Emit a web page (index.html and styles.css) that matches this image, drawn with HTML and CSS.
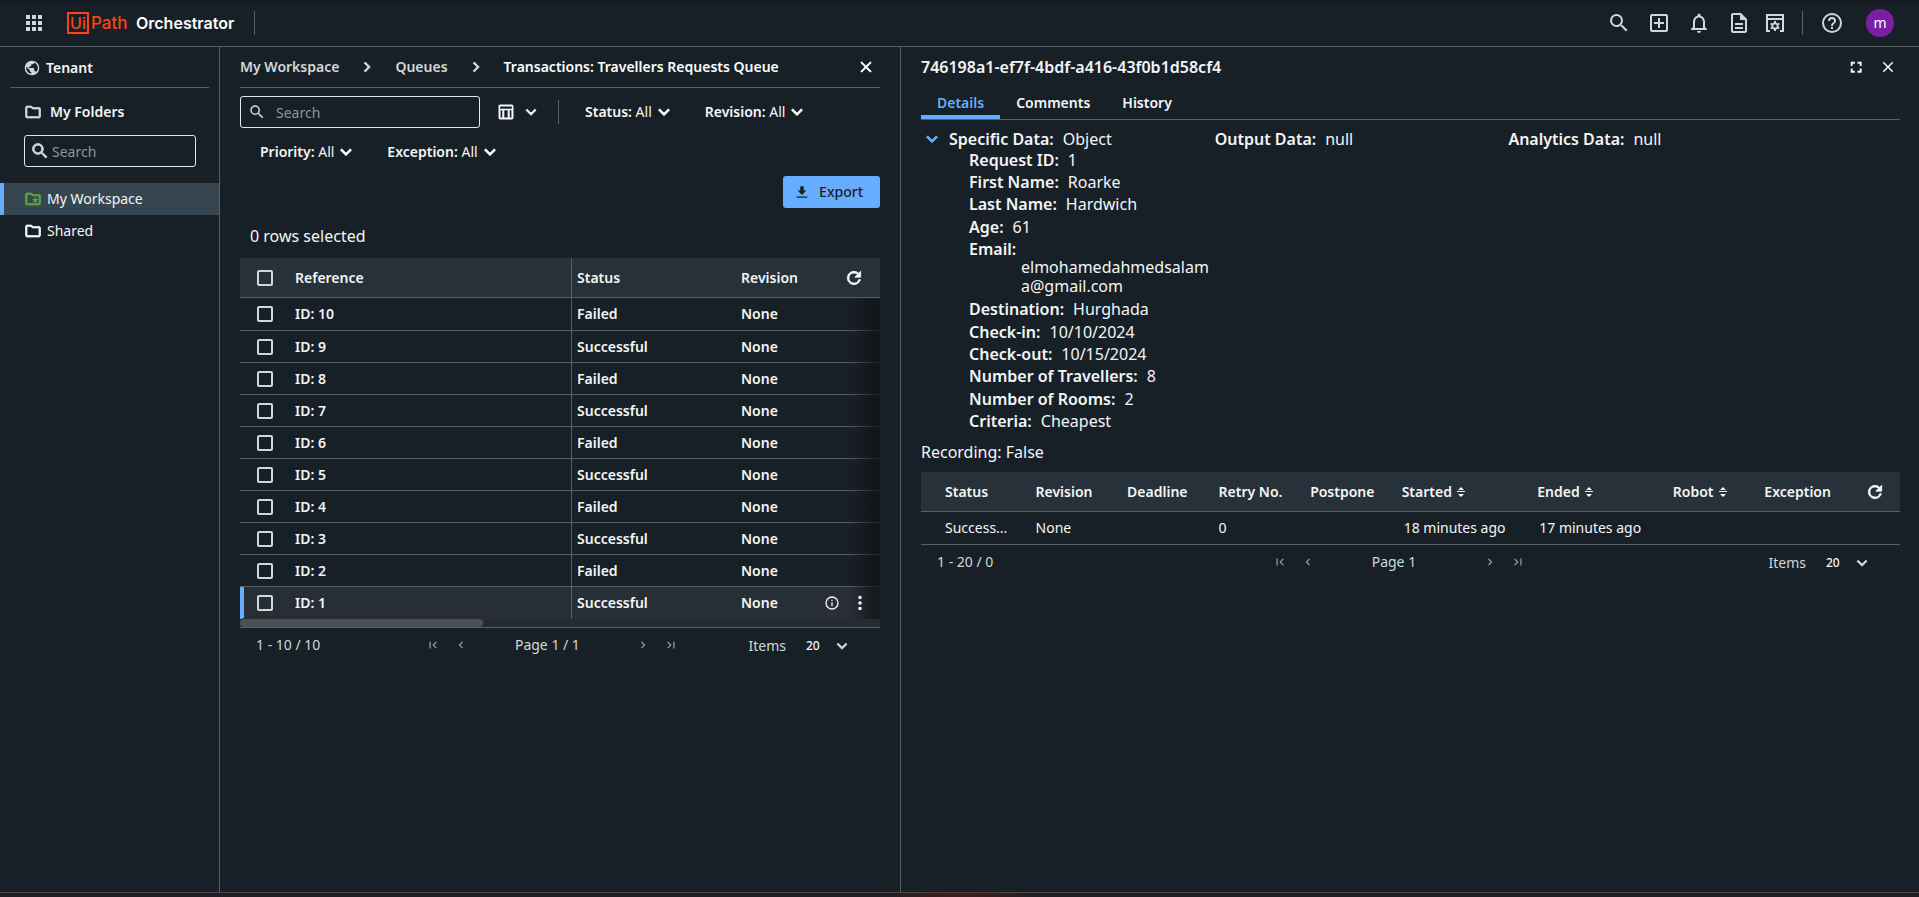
FILE: index.html
```html
<!DOCTYPE html>
<html lang="en">
<head>
<meta charset="utf-8">
<title>UiPath Orchestrator</title>
<link rel="stylesheet" href="styles.css">
</head>
<body>
<svg class="sprite" aria-hidden="true">
  <symbol id="search" viewBox="0 0 24 24"><path d="M15.5 14h-.79l-.28-.27A6.47 6.47 0 0 0 16 9.5 6.5 6.5 0 1 0 9.5 16c1.61 0 3.09-.59 4.23-1.57l.27.28v.79l5 4.99L20.49 19l-4.99-5zm-6 0C7.01 14 5 11.99 5 9.5S7.01 5 9.5 5 14 7.01 14 9.5 11.99 14 9.5 14z"/></symbol>
  <symbol id="down" viewBox="0 0 24 24"><path d="M7.41 8.59 12 13.17l4.59-4.58L18 10l-6 6-6-6z"/></symbol>
  <symbol id="right" viewBox="0 0 24 24"><path d="M10 6 8.59 7.41 13.17 12l-4.58 4.59L10 18l6-6z"/></symbol>
  <symbol id="left" viewBox="0 0 24 24"><path d="M15.41 7.41 14 6l-6 6 6 6 1.41-1.41L10.83 12z"/></symbol>
  <symbol id="first" viewBox="0 0 24 24"><path d="M18.41 16.59 13.82 12l4.59-4.59L17 6l-6 6 6 6zM6 6h2v12H6z"/></symbol>
  <symbol id="last" viewBox="0 0 24 24"><path d="M5.59 7.41 10.18 12l-4.59 4.59L7 18l6-6-6-6zM16 6h2v12h-2z"/></symbol>
  <symbol id="close" viewBox="0 0 24 24"><path d="M19 6.41 17.59 5 12 10.59 6.41 5 5 6.41 10.59 12 5 17.59 6.41 19 12 13.41 17.59 19 19 17.59 13.41 12z"/></symbol>
  <symbol id="refresh" viewBox="0 0 24 24"><path d="M17.65 6.35A7.96 7.96 0 0 0 12 4a8 8 0 1 0 7.73 10h-2.08A6 6 0 1 1 12 6c1.66 0 3.14.69 4.22 1.78L13 11h7V4z"/></symbol>
  <symbol id="folder" viewBox="0 0 24 24"><path d="m9.17 6 2 2H20v10H4V6h5.17M10 4H4c-1.1 0-2 .9-2 2v12c0 1.1.9 2 2 2h16c1.1 0 2-.9 2-2V8c0-1.1-.9-2-2-2h-8z"/></symbol>
  <symbol id="sort" viewBox="0 0 12 16"><path d="M6 3l3 3H3zM6 13l-3-3h6zM2 7h8v1H2z"/></symbol>
</svg>

<header class="topbar">
  <button class="icon-btn apps" aria-label="Apps"><svg class="i24" viewBox="0 0 24 24"><path d="M4 4h4v4H4zm6 0h4v4h-4zm6 0h4v4h-4zM4 10h4v4H4zm6 0h4v4h-4zm6 0h4v4h-4zM4 16h4v4H4zm6 0h4v4h-4zm6 0h4v4h-4z"/></svg></button>
  <a class="brand" href="#"><span class="logo-box">Ui</span><span class="logo-path">Path</span><span class="product">Orchestrator</span></a>
  <span class="vline"></span>
  <nav class="tools" aria-label="Tools">
    <button class="icon-btn" aria-label="Search"><svg class="i24"><use href="#search"/></svg></button>
    <button class="icon-btn" aria-label="Add"><svg class="i24" viewBox="0 0 24 24"><path d="M19 3H5a2 2 0 0 0-2 2v14c0 1.1.9 2 2 2h14a2 2 0 0 0 2-2V5a2 2 0 0 0-2-2zm0 16H5V5h14v14zm-8-2h2v-4h4v-2h-4V7h-2v4H7v2h4z"/></svg></button>
    <button class="icon-btn" aria-label="Notifications"><svg class="i24" viewBox="0 0 24 24"><path d="M12 22c1.1 0 2-.9 2-2h-4c0 1.1.9 2 2 2zm6-6v-5c0-3.07-1.63-5.64-4.5-6.32V4a1.5 1.5 0 0 0-3 0v.68C7.64 5.36 6 7.92 6 11v5l-2 2v1h16v-1zm-2 1H8v-6c0-2.48 1.51-4.5 4-4.5s4 2.02 4 4.5z"/></svg></button>
    <button class="icon-btn" aria-label="Documentation"><svg class="i24" viewBox="0 0 24 24"><path d="M8 16h8v2H8zm0-4h8v2H8zm6-10H6c-1.100 0-2 .9-2 2v16c0 1.100.89 2 1.990 2H18c1.100 0 2-.9 2-2V8zm4 18H6V4h7v5h5z"/></svg></button>
    <button class="icon-btn settings" aria-label="Settings"><svg class="i24" viewBox="0 0 24 24"><path fill-rule="evenodd" d="M3 3h18v18h-4v-2h2V9H5v10h2v2H3zm2 2v2h14V5z"/><circle cx="12" cy="15" r="2.700" fill="none" stroke="currentColor" stroke-width="1.800"/><path fill="none" stroke="currentColor" stroke-width="2" d="M12 10v2m0 6v2m-4.300-7.500 1.700 1m5.200 3 1.700 1m-8.600 0 1.700-1m5.200-3 1.700-1"/></svg></button>
    <span class="vline"></span>
    <button class="icon-btn help" aria-label="Help"><svg class="i24" viewBox="0 0 24 24"><path d="M11 18h2v-2h-2zm1-16a10 10 0 1 0 0 20 10 10 0 0 0 0-20zm0 18a8 8 0 1 1 0-16 8 8 0 0 1 0 16zm0-14a4 4 0 0 0-4 4h2c0-1.100.9-2 2-2s2 .9 2 2c0 2-3 1.750-3 5h2c0-2.250 3-2.500 3-5a4 4 0 0 0-4-4z"/></svg></button>
    <button class="avatar" aria-label="Account">m</button>
  </nav>
</header>

<div class="shell">
  <aside class="sidebar">
    <a class="tenant" href="#"><svg class="i16" viewBox="0 0 24 24"><path d="M12 1a11 11 0 1 0 0 22 11 11 0 0 0 0-22zm-1.100 19.700A8.800 8.800 0 0 1 3.500 10l5.200 5.300v1c0 1.200 1 2.200 2.200 2.200zm7.600-2.800a2.200 2.200 0 0 0-2.100-1.500h-1.100v-3.300c0-.6-.5-1.100-1.100-1.100H7.600V9.800h2.200c.6 0 1.100-.5 1.100-1.100V6.500h2.200c1.200 0 2.200-1 2.200-2.200v-.5a8.800 8.800 0 0 1 3.200 14.100z"/></svg>Tenant</a>
    <h2 class="folders"><svg class="i18 heavy"><use href="#folder"/></svg>My Folders</h2>
    <label class="search side-search"><svg class="i20 heavy"><use href="#search"/></svg><input type="text" placeholder="Search" aria-label="Search folders"></label>
    <nav class="tree" aria-label="Folders">
      <a class="node active" href="#"><svg class="i18 heavy green" viewBox="0 0 24 24"><path d="m9.170 6 2 2H20v10H4V6h5.170M10 4H4c-1.100 0-2 .9-2 2v12c0 1.100.9 2 2 2h16c1.100 0 2-.9 2-2V8c0-1.100-.9-2-2-2h-8z"/><path stroke="none" d="m15 9 1.200 2.900 3.100.2-2.400 2 .8 3L15 15.500l-2.700 1.600.8-3-2.400-2 3.100-.2z"/></svg>My Workspace</a>
      <a class="node" href="#"><svg class="i18 heavy"><use href="#folder"/></svg>Shared</a>
    </nav>
  </aside>

  <main class="list">
    <div class="crumbs">
      <a href="#">My Workspace</a><svg class="i20 heavy"><use href="#right"/></svg><a href="#">Queues</a><svg class="i20 heavy"><use href="#right"/></svg><span class="current">Transactions: Travellers Requests Queue</span>
      <button class="icon-btn close" aria-label="Close"><svg class="i18 heavy"><use href="#close"/></svg></button>
    </div>
    <div class="filters">
      <label class="search main-search"><svg class="i18"><use href="#search"/></svg><input type="text" placeholder="Search" aria-label="Search transactions"></label>
      <button class="columns" aria-label="Columns"><svg class="i20" viewBox="0 0 24 24"><path fill-rule="evenodd" d="M5 3h14a2 2 0 0 1 2 2v14a2 2 0 0 1-2 2H5a2 2 0 0 1-2-2V5c0-1.100.9-2 2-2zm0 2.500V8h14V5.500zM5.500 10v8.500h2V10zm4.500 0v8.500h4V10zm6.500 0v8.500h2V10z"/></svg><svg class="i20 heavy"><use href="#down"/></svg></button>
      <span class="vline"></span>
      <button class="filter"><b>Status:</b> All<svg class="i22 heavy"><use href="#down"/></svg></button>
      <button class="filter"><b>Revision:</b> All<svg class="i22 heavy"><use href="#down"/></svg></button>
      <button class="filter"><b>Priority:</b> All<svg class="i22 heavy"><use href="#down"/></svg></button>
      <button class="filter"><b>Exception:</b> All<svg class="i22 heavy"><use href="#down"/></svg></button>
    </div>
    <button class="export"><svg class="i14" viewBox="0 0 24 24"><path d="M19.500 9.500h-4.500V2H9v7.500H4.500L12 17zM3 19.500h18V22H3z"/></svg>Export</button>
    <p class="selected-count">0 rows selected</p>
    <div class="grid-wrap">
      <table class="grid">
        <colgroup><col class="c-check"><col class="c-ref"><col class="c-status"><col class="c-rev"><col class="c-act"></colgroup>
        <thead><tr><th><input type="checkbox" aria-label="Select all"></th><th class="ref">Reference</th><th>Status</th><th>Revision</th><th class="act"><button class="icon-btn" aria-label="Refresh"><svg class="i20 heavy"><use href="#refresh"/></svg></button></th></tr></thead>
        <tbody>
          <tr><td><input type="checkbox" aria-label="ID: 10"></td><td class="ref">ID: 10</td><td>Failed</td><td>None</td><td></td></tr>
          <tr><td><input type="checkbox" aria-label="ID: 9"></td><td class="ref">ID: 9</td><td>Successful</td><td>None</td><td></td></tr>
          <tr><td><input type="checkbox" aria-label="ID: 8"></td><td class="ref">ID: 8</td><td>Failed</td><td>None</td><td></td></tr>
          <tr><td><input type="checkbox" aria-label="ID: 7"></td><td class="ref">ID: 7</td><td>Successful</td><td>None</td><td></td></tr>
          <tr><td><input type="checkbox" aria-label="ID: 6"></td><td class="ref">ID: 6</td><td>Failed</td><td>None</td><td></td></tr>
          <tr><td><input type="checkbox" aria-label="ID: 5"></td><td class="ref">ID: 5</td><td>Successful</td><td>None</td><td></td></tr>
          <tr><td><input type="checkbox" aria-label="ID: 4"></td><td class="ref">ID: 4</td><td>Failed</td><td>None</td><td></td></tr>
          <tr><td><input type="checkbox" aria-label="ID: 3"></td><td class="ref">ID: 3</td><td>Successful</td><td>None</td><td></td></tr>
          <tr><td><input type="checkbox" aria-label="ID: 2"></td><td class="ref">ID: 2</td><td>Failed</td><td>None</td><td></td></tr>
          <tr class="open"><td><input type="checkbox" aria-label="ID: 1"></td><td class="ref">ID: 1</td><td>Successful</td><td>None</td><td class="act"><div class="actions"><button class="icon-btn" aria-label="Details"><svg class="i16" viewBox="0 0 24 24"><path d="M11 7h2v2h-2zm0 4h2v6h-2zm1-9a10 10 0 1 0 0 20 10 10 0 0 0 0-20zm0 18a8 8 0 1 1 0-16 8 8 0 0 1 0 16z"/></svg></button><button class="icon-btn" aria-label="More actions"><svg class="i22" viewBox="0 0 24 24"><path d="M12 8a2 2 0 1 0 0-4 2 2 0 0 0 0 4zm0 2a2 2 0 1 0 0 4 2 2 0 0 0 0-4zm0 6a2 2 0 1 0 0 4 2 2 0 0 0 0-4z"/></svg></button></div></td></tr>
        </tbody>
      </table>
      <div class="edge-shade"></div>
    </div>
    <div class="hscroll"><span></span></div>
    <div class="pager">
      <span>1 - 10 / 10</span>
      <div class="pages"><button aria-label="First page"><svg class="i14"><use href="#first"/></svg></button><button aria-label="Previous page"><svg class="i14"><use href="#left"/></svg></button><span>Page 1 / 1</span><button aria-label="Next page"><svg class="i14"><use href="#right"/></svg></button><button aria-label="Last page"><svg class="i14"><use href="#last"/></svg></button></div>
      <label class="items">Items<select><option>20</option></select><svg class="i20 heavy"><use href="#down"/></svg></label>
    </div>
  </main>

  <section class="detail">
    <div class="detail-head"><h1>746198a1-ef7f-4bdf-a416-43f0b1d58cf4</h1>
      <button class="icon-btn" aria-label="Full screen"><svg class="i18" viewBox="0 0 24 24"><path d="M7.500 14H5v5.500h5.500V17h-3zM5 10.500h2.500v-3h3V5H5zM17 17h-3v2.500h5.500V14H17zM14 5v2.500h3v3h2.500V5z"/></svg></button>
      <button class="icon-btn" aria-label="Close details"><svg class="i18"><use href="#close"/></svg></button>
    </div>
    <div class="tabs" role="tablist"><button role="tab" aria-selected="true">Details</button><button role="tab" aria-selected="false">Comments</button><button role="tab" aria-selected="false">History</button></div>
    <div class="data">
      <div>
        <p class="root"><button class="icon-btn" aria-label="Collapse"><svg class="i22 heavy"><use href="#down"/></svg></button><b>Specific Data:</b><span>Object</span></p>
        <dl>
          <div><dt>Request ID:</dt><dd>1</dd></div>
          <div><dt>First Name:</dt><dd>Roarke</dd></div>
          <div><dt>Last Name:</dt><dd>Hardwich</dd></div>
          <div><dt>Age:</dt><dd>61</dd></div>
          <div class="long"><dt>Email:</dt><dd>elmohamedahmedsalama@gmail.com</dd></div>
          <div><dt>Destination:</dt><dd>Hurghada</dd></div>
          <div><dt>Check-in:</dt><dd>10/10/2024</dd></div>
          <div><dt>Check-out:</dt><dd>10/15/2024</dd></div>
          <div><dt>Number of Travellers:</dt><dd>8</dd></div>
          <div><dt>Number of Rooms:</dt><dd>2</dd></div>
          <div><dt>Criteria:</dt><dd>Cheapest</dd></div>
        </dl>
      </div>
      <p class="root"><b>Output Data:</b><span>null</span></p>
      <p class="root"><b>Analytics Data:</b><span>null</span></p>
    </div>
    <p class="recording">Recording: False</p>
    <table class="runs">
      <colgroup><col class="r-first"><col class="r-n"><col class="r-n"><col class="r-n"><col class="r-n"><col class="r-w"><col class="r-w"><col class="r-n"><col class="r-rest"></colgroup>
      <thead><tr><th>Status</th><th>Revision</th><th>Deadline</th><th>Retry No.</th><th>Postpone</th><th>Started<svg class="sort"><use href="#sort"/></svg></th><th>Ended<svg class="sort"><use href="#sort"/></svg></th><th>Robot<svg class="sort"><use href="#sort"/></svg></th><th><div class="last-head">Exception<button class="icon-btn" aria-label="Refresh runs"><svg class="i20 heavy"><use href="#refresh"/></svg></button></div></th></tr></thead>
      <tbody><tr><td>Success...</td><td>None</td><td></td><td>0</td><td></td><td class="time">18 minutes ago</td><td class="time">17 minutes ago</td><td></td><td></td></tr></tbody>
    </table>
    <div class="pager">
      <span>1 - 20 / 0</span>
      <div class="pages"><button aria-label="First page"><svg class="i14"><use href="#first"/></svg></button><button aria-label="Previous page"><svg class="i14"><use href="#left"/></svg></button><span>Page 1</span><button aria-label="Next page"><svg class="i14"><use href="#right"/></svg></button><button aria-label="Last page"><svg class="i14"><use href="#last"/></svg></button></div>
      <label class="items">Items<select><option>20</option></select><svg class="i20 heavy"><use href="#down"/></svg></label>
    </div>
  </section>
</div>
<footer class="bottom-strip"></footer>
</body>
</html>
```

FILE: styles.css
```css
:root {
  --bg: #182027;
  --head: #273139;
  --line: #526069;
  --text: #f4f5f7;
  --soft: #cfd8dd;
  --blue: #66adff;
}
* { box-sizing: border-box; }
body {
  margin: 0;
  min-height: 100vh;
  display: flex;
  flex-direction: column;
  background: var(--bg);
  color: var(--text);
  font: 14px/20px "Noto Sans", sans-serif;
}
h1, h2, p, dl, dd { margin: 0; }
a { color: inherit; text-decoration: none; }
b, dt, th { font-weight: 600; }
button { border: 0; padding: 0; background: none; color: inherit; font: inherit; cursor: pointer; }
svg { fill: currentColor; flex: none; }
.sprite { position: absolute; width: 0; height: 0; }
.i14 { width: 14px; height: 14px; }
.i16 { width: 16px; height: 16px; }
.i18 { width: 18px; height: 18px; }
.i20 { width: 20px; height: 20px; }
.i22 { width: 22px; height: 22px; }
.i24 { width: 24px; height: 24px; }
.heavy { stroke: currentColor; stroke-width: 1; }
.icon-btn { display: flex; align-items: center; justify-content: center; }
.vline { width: 1px; height: 24px; background: var(--line); }

/* Top bar */
.topbar {
  display: flex;
  align-items: center;
  height: 47px;
  padding: 0 25px 0 22px;
  border-bottom: 1px solid var(--line);
  background: linear-gradient(#171820, var(--bg) 4px);
  color: var(--soft);
}
.brand { display: flex; align-items: center; margin: 0 20px 0 21px; font-family: Inter, sans-serif; }
.logo-box {
  width: 22px;
  height: 22px;
  border: 2px solid #fa4616;
  color: #fa4616;
  font: 500 16px/18px Inter, sans-serif;
  text-align: center;
}
.logo-path { width: 47px; padding-left: 2px; color: #fa4616; font-size: 17px; font-weight: 500; }
.product { color: #fff; font-size: 16px; font-weight: 600; }
.tools { display: flex; align-items: center; gap: 16px; margin-left: auto; }
.settings { margin: 0 -1px 0 -4px; }
.help { margin-left: 1px; }
.avatar { width: 28px; height: 28px; margin-left: 6px; border-radius: 50%; background: #7b1fa2; color: #fff; }

.shell { flex: 1; display: grid; grid-template-columns: 220px 681px 1fr; }

/* Sidebar */
.sidebar { border-right: 1px solid var(--line); }
.tenant {
  display: flex;
  align-items: center;
  gap: 6px;
  height: 41px;
  margin: 0 10px;
  padding: 2px 0 0 14px;
  border-bottom: 1px solid var(--line);
  font-weight: 600;
}
.tenant svg, .folders svg { color: var(--soft); }
.folders { display: flex; align-items: center; gap: 8px; height: 47px; padding-left: 24px; font-size: 14px; font-weight: 600; }
.search { display: flex; align-items: center; height: 32px; border: 1px solid #dfe5e8; border-radius: 3px; color: var(--soft); }
.search input { flex: 1; min-width: 0; border: 0; padding: 2px 0 0; outline: 0; background: none; color: var(--text); font: inherit; }
.search input::placeholder { color: #8a97a0; opacity: 1; }
.side-search { gap: 2px; margin: 0 23px 16px 24px; padding-left: 5px; }
.node { display: flex; align-items: center; gap: 5px; height: 32px; padding-left: 24px; }
.node.active { border-left: 4px solid var(--blue); padding-left: 20px; background: #374551; }
.green { color: #55a839; }

/* Transactions list */
.list { padding: 0 20px; border-right: 1px solid var(--line); }
.crumbs { display: flex; align-items: center; gap: 18px; height: 41px; border-bottom: 1px solid var(--line); color: #d5d7d9; font-weight: 600; }
.crumbs .current { color: #fff; }
.crumbs .close { margin-left: auto; padding-right: 5px; color: #fff; }
.filters { display: flex; flex-wrap: wrap; align-items: center; row-gap: 8px; padding: 8px 0; }
.main-search { width: 240px; gap: 10px; padding-left: 7px; }
.columns { display: flex; align-items: center; gap: 5px; margin: 0 17px 0 16px; }
.filter { display: flex; align-items: center; height: 32px; padding-right: 10px; white-space: pre; }
.filter svg { margin-left: 1px; }
.vline + .filter { margin-left: 26px; }
.filter + .filter { margin-left: 20px; }
.export {
  display: flex;
  align-items: center;
  gap: 10px;
  height: 32px;
  margin-left: auto;
  padding: 0 17px 0 12px;
  border-radius: 3px;
  background: var(--blue);
  color: #182027;
  font-weight: 500;
}
.selected-count { padding: 16px 10px 10px; font-size: 16px; line-height: 24px; }
table { width: 100%; table-layout: fixed; border-collapse: separate; border-spacing: 0; }
th, td { padding: 0; text-align: left; white-space: nowrap; border-bottom: 1px solid var(--line); }
th { background: var(--head); }
.grid-wrap { position: relative; }
.grid th { height: 40px; }
.grid td { height: 32px; font-weight: 600; }
.grid tr:first-child td { height: 33px; }
.grid th:first-child, .grid td:first-child { padding-left: 17px; }
.grid .ref { border-right: 1px solid var(--line); }
.grid .ref + * { padding-left: 5px; }
.c-check { width: 55px; }
.c-status { width: 169px; }
.c-rev { width: 75px; }
.c-act { width: 64px; }
.grid th.act { padding-left: 28px; }
.grid td.act { padding-left: 8px; }
.actions { position: relative; z-index: 1; display: flex; align-items: center; gap: 9px; }
.grid input {
  display: block;
  appearance: none;
  width: 16px;
  height: 16px;
  margin: 0;
  border: 2px solid var(--soft);
  border-radius: 2px;
}
.grid .open td { background: #272e35; border-bottom-color: transparent; }
.grid .open td:first-child { border-left: 4px solid var(--blue); padding-left: 13px; }
.edge-shade { position: absolute; top: 41px; right: 0; bottom: 0; width: 30px; background: linear-gradient(to right, transparent, rgba(16, 18, 20, .7) 80%); pointer-events: none; }
.hscroll { height: 9px; border-bottom: 1px solid var(--line); background: #252b32; }
.hscroll span { display: block; width: 38%; height: 8px; border-radius: 4px; background: #4d5153; }
.pager { display: flex; align-items: center; justify-content: space-between; height: 34px; padding: 0 28px 0 16px; color: var(--soft); }
.pages { display: flex; align-items: center; margin-left: 36px; }
.pages button { display: flex; align-items: center; justify-content: center; width: 28px; height: 24px; color: #9aa5ac; }
.pages span { width: 154px; padding-right: 10px; text-align: center; }
.items { display: flex; align-items: center; height: 34px; padding-top: 2px; }
.items select { appearance: none; width: 26px; margin: 0 0 0 20px; padding: 0; border: 0; background: none; color: var(--text); font: 500 12px/20px "Noto Sans", sans-serif; }

/* Transaction detail */
.detail { padding: 0 19px 0 20px; }
.detail-head { display: flex; align-items: center; gap: 14px; height: 40px; padding-right: 3px; }
.detail-head h1 { flex: 1; font-size: 16px; font-weight: 600; line-height: 24px; }
.tabs { display: flex; height: 33px; border-bottom: 1px solid var(--line); }
.tabs button { padding: 4px 16px 0; border-bottom: 4px solid transparent; font-weight: 600; }
.tabs [aria-selected="true"] { border-color: var(--blue); color: var(--blue); }
.data { display: grid; grid-template-columns: repeat(3, 30%); padding-top: 9px; font-size: 16px; line-height: 22px; }
.root { display: flex; gap: 9px; line-height: 20px; }
.root .icon-btn { width: 22px; height: 20px; margin-right: -3px; color: var(--blue); }
dl { padding-left: 48px; }
dl > div { display: flex; gap: 9px; min-height: 22px; }
dl > div:nth-child(3n) { min-height: 23px; }
dl .long { display: block; padding: 2px 0; }
.long dt { line-height: 18px; }
.long dd { padding-left: 52px; line-height: 19px; overflow-wrap: anywhere; }
.recording { padding: 8px 0; font-size: 16px; line-height: 24px; }
.runs th { height: 40px; }
.runs td { height: 33px; }
.runs th:first-child, .runs td:first-child { padding-left: 24px; }
.runs .time { padding-left: 2px; }
.r-first { width: 11.7%; }
.r-n { width: 9.35%; }
.r-w { width: 13.85%; }
.sort { width: 12px; height: 16px; margin-left: 3px; vertical-align: -3px; }
.last-head { display: flex; align-items: center; justify-content: space-between; padding-right: 15px; }

.bottom-strip { height: 5px; border-top: 1px solid #4a4543; background: radial-gradient(ellipse 80px 12px at 50% 0, #4a1a18, #1f1f23); }
```
